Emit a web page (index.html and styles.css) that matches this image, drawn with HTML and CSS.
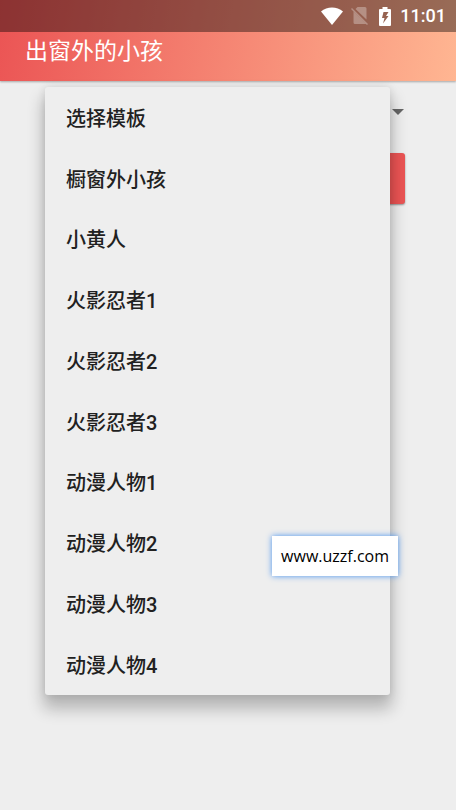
FILE: index.html
```html
<!DOCTYPE html>
<html lang="zh-CN">

<head>
    <meta charset="UTF-8">
    <meta name="viewport" content="width=device-width, initial-scale=1.0">
    <title>出窗外的小孩</title>
    <link rel="stylesheet" href="styles.css">
</head>

<body>

    <header class="app-header">
        <div class="status-bar">
            <svg class="wifi" viewBox="0 0 22 18">
                <path d="M0 4.5C6-1 16-1 22 4.5L11 18z" fill="#fff"/>
            </svg>
            <svg class="sim" viewBox="0 0 18 18">
                <path d="M6.500 0H14q1.500 0 1.500 1.500V12.500L4.500 2zM2.500 4.500L15 17H4q-1.500 0-1.500-1.500z" fill="#fff" fill-opacity=".3"/>
                <path d="M.5 1.500L16.500 17.500" stroke="#fff" stroke-opacity=".3" stroke-width="1.500"/>
            </svg>
            <svg class="battery" viewBox="0 0 12 19">
                <path fill-rule="evenodd" d="M3.500 0h5v2H11q1 0 1 1v15q0 1-1 1H1q-1 0-1-1V3q0-1 1-1h2.500zM4.500 5L3 11h2.500L4 16.500L9.500 9H7l2.500-4z" fill="#fff"/>
            </svg>
            <span class="time">11:01</span>
        </div>
        <h1>出窗外的小孩</h1>
    </header>

    <!-- 模板选择 -->
    <main class="content">
        <select class="template" aria-label="选择模板">
            <option>选择模板</option>
        </select>
        <button type="button" class="submit" aria-label="生成"></button>

        <!-- 下拉菜单 -->
        <div class="menu">
            <button type="button">选择模板</button>
            <button type="button">橱窗外小孩</button>
            <button type="button">小黄人</button>
            <button type="button">火影忍者1</button>
            <button type="button">火影忍者2</button>
            <button type="button">火影忍者3</button>
            <button type="button">动漫人物1</button>
            <button type="button">动漫人物2</button>
            <button type="button">动漫人物3</button>
            <button type="button">动漫人物4</button>
        </div>
    </main>

    <div class="site-tag">www.uzzf.com</div>

</body>

</html>
```

FILE: styles.css
```css
* {
    box-sizing: border-box;
}

body {
    margin: 0;
    min-height: 100vh;
    background: #eee;
    color: #212121;
    font-family: Roboto, "Noto Sans CJK SC", sans-serif;
    position: relative;
}

/* 顶部 */
.app-header {
    background: linear-gradient(100deg, #eb5454, #ffb692);
    box-shadow: 0 1px 2px rgba(0, 0, 0, 0.3);
}

.status-bar {
    display: flex;
    align-items: center;
    justify-content: flex-end;
    height: 32px;
    padding-right: 10px;
    background: rgba(0, 0, 0, 0.4);
    color: #fff;
}

.wifi {
    width: 22px;
    height: 18px;
    margin-right: 8px;
}

.sim {
    width: 18px;
    height: 18px;
    margin-right: 10px;
}

.battery {
    width: 12px;
    height: 19px;
    margin-right: 9px;
}

.time {
    font-size: 18px;
    font-weight: 500;
    line-height: 32px;
}

h1 {
    margin: 0;
    padding: 0 25px 10px;
    color: #fff;
    font-size: 23px;
    font-weight: 400;
    line-height: 39px;
}

.content {
    position: relative;
    padding: 12px 51px;
}

.template {
    display: block;
    width: 100%;
    height: 38px;
    margin-bottom: 22px;
    padding: 0 16px;
    border: 0;
    appearance: none;
    background: url("data:image/svg+xml,%3Csvg xmlns='http://www.w3.org/2000/svg' width='12' height='6'%3E%3Cpath d='M0 0h12L6 6z' fill='%23666'/%3E%3C/svg%3E") no-repeat right 1px center;
    color: #212121;
    font: inherit;
    font-size: 16px;
}

.submit {
    display: block;
    width: 100%;
    height: 51px;
    border: 0;
    border-radius: 3px;
    background: #eb5454;
    box-shadow: 0 1px 2px rgba(0, 0, 0, 0.4);
}

/* 下拉菜单 */
.menu {
    position: absolute;
    top: 6px;
    left: 45px;
    right: 66px;
    display: flex;
    flex-direction: column;
    height: 75vh;
    border-radius: 3px;
    background: #eee;
    box-shadow: 0 12px 16px 2px rgba(0, 0, 0, 0.24), 0 0 8px rgba(0, 0, 0, 0.1);
}

.menu button {
    flex: 1;
    padding: 0 21px;
    border: 0;
    background: none;
    color: #212121;
    font: inherit;
    font-size: 20px;
    font-weight: 500;
    text-align: left;
}

.site-tag {
    position: absolute;
    top: 536px;
    right: 58px;
    padding: 0 9px;
    background: #fff;
    box-shadow: 0 0 6px #4a94f0;
    color: #000;
    font-family: "Open Sans", sans-serif;
    font-size: 16px;
    line-height: 40px;
}
```
